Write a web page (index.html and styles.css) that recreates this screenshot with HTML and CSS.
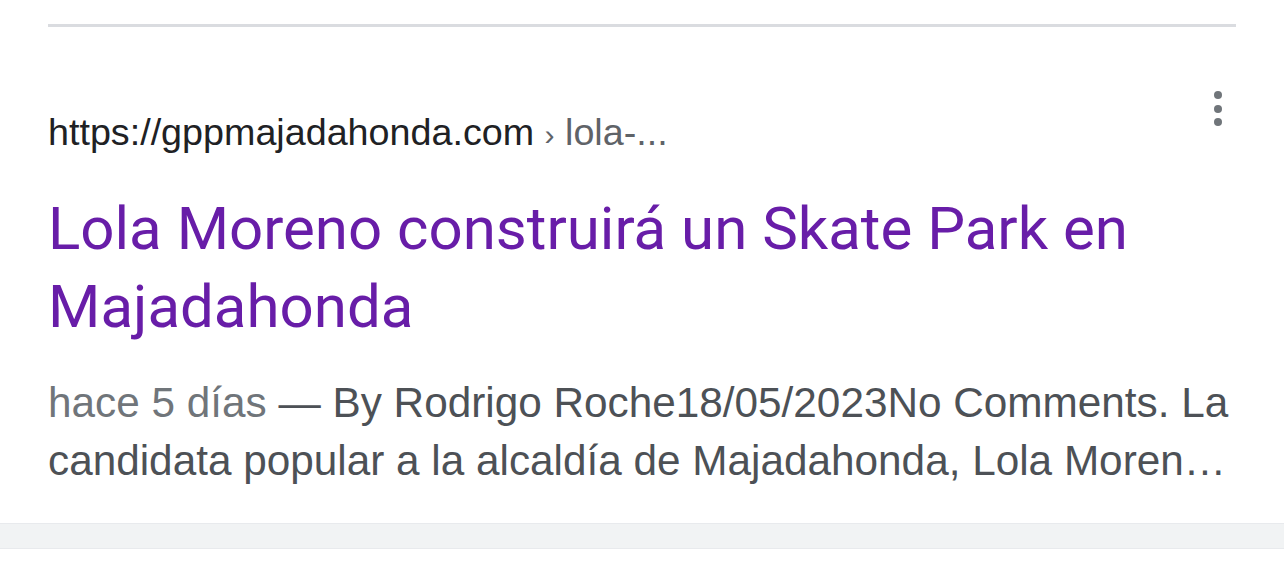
FILE: index.html
```html
<!DOCTYPE html>
<html lang="es">
<head>
<meta charset="utf-8">
<link rel="stylesheet" href="styles.css">
</head>
<body>
<div class="card">
  <div class="topline"></div>
  <div class="result">
    <div class="urlrow">
      <div class="url"><span class="domain">https://gppmajadahonda.com</span><span class="path"> <span class="sep">›</span> lola-...</span></div>
      <div class="more" aria-label="Más opciones"><span></span><span></span><span></span></div>
    </div>
    <a class="title" href="#">Lola Moreno construirá un Skate Park en Majadahonda</a>
    <div class="snippet"><span class="date">hace 5 días</span> — By Rodrigo Roche18/05/2023No Comments. La candidata popular a la alcaldía de Majadahonda, Lola Moren…</div>
  </div>
</div>
<div class="band"></div>
</body>
</html>
```

FILE: styles.css
```css
html, body {
  margin: 0;
  padding: 0;
  background: #ffffff;
}
body {
  width: 1284px;
  height: 561px;
  overflow: hidden;
}
.card {
  padding: 24px 48px 0;
  height: 523px;
  box-sizing: border-box;
}
.topline {
  height: 3px;
  background: #dadce0;
}
.result {
  padding-top: 74px;
}
.urlrow {
  display: flex;
  justify-content: space-between;
  align-items: flex-start;
  height: 54px;
}
.url {
  font-family: "Liberation Sans", Arial, sans-serif;
  font-size: 37.7px;
  line-height: 54px;
  color: #202124;
  margin-top: 4px;
}
.path {
  color: #5f6368;
}
.sep {
  font-size: 30px;
}
.more {
  display: flex;
  flex-direction: column;
  gap: 5.5px;
  margin-right: 14px;
  margin-top: -10px;
}
.more span {
  width: 8px;
  height: 8px;
  border-radius: 50%;
  background: #70757a;
}
.title {
  display: block;
  font-family: Roboto, "Noto Sans", sans-serif;
  font-size: 60px;
  line-height: 78px;
  color: #681da8;
  text-decoration: none;
  margin-top: 35px;
  padding-right: 40px;
}
.snippet {
  font-family: "Liberation Sans", Arial, sans-serif;
  font-size: 42.3px;
  line-height: 58px;
  color: #4d5156;
  margin-top: 28px;
}
.date {
  color: #70757a;
}
.band {
  height: 24px;
  background: #f1f3f4;
  border-top: 1px solid #e8eaed;
  border-bottom: 1px solid #e8eaed;
}
```
